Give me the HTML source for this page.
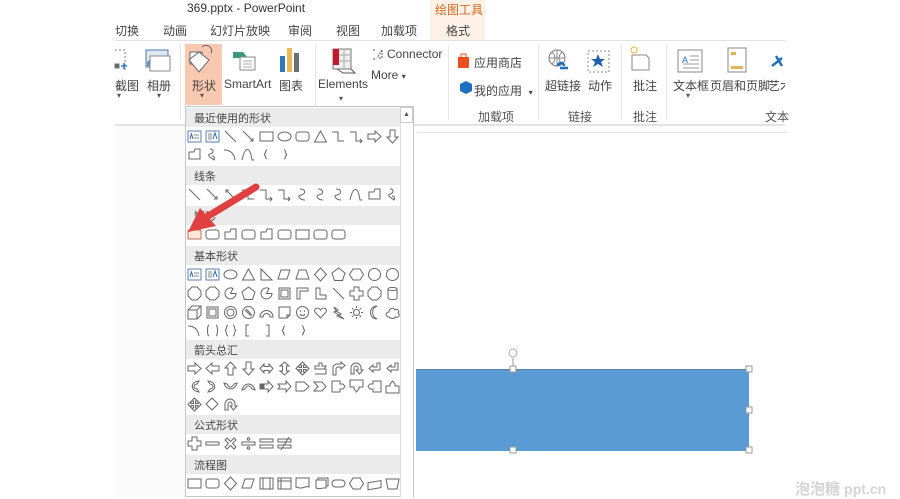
<!DOCTYPE html>
<html><head><meta charset="utf-8"><style>
*{margin:0;padding:0;box-sizing:border-box}
body{width:900px;height:497px;overflow:hidden;background:#fff;position:relative;font-family:"Liberation Sans","Noto Sans CJK SC",sans-serif;color:#444}
.a{position:absolute;white-space:nowrap}
.t{font-size:12px;color:#444}
.s{font-size:11px;color:#555}
</style></head><body>
<div class="a" style="left:430px;top:0;width:55px;height:40px;background:#fdf1e8"></div>
<div class="a t" style="left:187px;top:1px;font-size:12px;color:#333">369.pptx - PowerPoint</div>
<div class="a t" style="left:435px;top:1px;color:#d2691e">绘图工具</div>
<div class="a t" style="left:115px;top:22px">切换</div>
<div class="a t" style="left:163px;top:22px">动画</div>
<div class="a t" style="left:210px;top:22px">幻灯片放映</div>
<div class="a t" style="left:288px;top:22px">审阅</div>
<div class="a t" style="left:336px;top:22px">视图</div>
<div class="a t" style="left:381px;top:22px">加载项</div>
<div class="a t" style="left:446px;top:22px">格式</div>
<div class="a" style="left:115px;top:40px;width:670px;height:1px;background:#e1e1e1"></div>
<div class="a" style="left:115px;top:124px;width:670px;height:2px;background:#e3e3e3"></div>
<div class="a" style="left:115px;top:126px;width:70px;height:371px;background:#fbfbfb"></div>
<div class="a" style="left:185px;top:44px;width:37px;height:61px;background:#f8c8b1"></div>
<div class="a" style="left:180px;top:45px;width:1px;height:75px;background:#e6e6e6"></div>
<div class="a" style="left:315px;top:45px;width:1px;height:75px;background:#e6e6e6"></div>
<div class="a" style="left:448px;top:45px;width:1px;height:75px;background:#e6e6e6"></div>
<div class="a" style="left:538px;top:45px;width:1px;height:75px;background:#e6e6e6"></div>
<div class="a" style="left:621px;top:45px;width:1px;height:75px;background:#e6e6e6"></div>
<div class="a" style="left:666px;top:45px;width:1px;height:75px;background:#e6e6e6"></div>
<svg class="a" style="left:0;top:0" width="900" height="130">
 <g fill="none" stroke="#777" stroke-width="1">
  <path d="M115 50h10v20" stroke-dasharray="2 2"/>
  <rect x="115" y="64" width="4" height="4" fill="#666"/>
  <path d="M121 66h6M124 63v6" stroke="#2a7bd4" stroke-width="1.5"/>
  <rect x="146" y="50" width="22" height="17" fill="#dfe9f4" stroke="#4a78a8"/>
  <path d="M147 62l6-5 5 4 4-3 5 4v4h-20z" fill="#5f8fc0" stroke="none"/>
  <rect x="150" y="56" width="20" height="15" fill="#fff" stroke="#888"/>
  <path d="M190 52h12v12h-12z" stroke="#666" fill="#fff"/>
  <path d="M203 48l10 8-10 12-10-12z" transform="translate(-4 4)" stroke="#666" fill="#fff"/>
  <path d="M202 47c4-4 12 0 9 6" stroke="#666"/>
  <path d="M233 52l10 0 5 6h-15z" fill="#3a9a7a" stroke="none"/>
  <rect x="240" y="57" width="15" height="13" fill="#fff" stroke="#888"/>
  <path d="M243 61h9M243 64h9M243 67h9" stroke="#aaa"/>
  <rect x="280" y="56" width="5" height="16" fill="#2e75c0" stroke="none"/>
  <rect x="287" y="48" width="5" height="24" fill="#e8b95a" stroke="none"/>
  <rect x="294" y="53" width="5" height="19" fill="#6f6f6f" stroke="none"/>
  <rect x="333" y="49" width="18" height="20" fill="#eee" stroke="#777"/>
  <path d="M333 49h6v16h-6z" fill="#c4182b" stroke="none"/>
  <path d="M339 55h12M339 61h12M344 49v20" stroke="#aaa"/>
  <path d="M337 69l6 4h12l-4-4" stroke="#555"/>
  <path d="M373 50h3M373 59h3M382 50l-5 8M382 50v8h-4" stroke="#555" stroke-dasharray="2 1"/>
  <path d="M458 57h11v11h-11z" fill="#e8501e" stroke="none"/>
  <path d="M461 57v-3h5v3" stroke="#e8501e"/>
  <path d="M460 84l6-3 6 3v7l-6 3-6-3z" fill="#1f6fc0" stroke="none"/>
  <circle cx="557" cy="58" r="8" stroke="#777"/>
  <path d="M549 58h16M557 50v16M552 52c4 4 4 8 0 12M562 52c-4 4-4 8 0 12" stroke="#888"/>
  <path d="M560 68h8M558 66a3 3 0 0 1 6 0" stroke="#1f6fc0" stroke-width="2.5"/>
  <rect x="588" y="51" width="21" height="21" stroke="#888" stroke-dasharray="2 2"/>
  <path d="M598 54l2 5h5l-4 3 2 5-5-3-5 3 2-5-4-3h5z" fill="#1f5fb0" stroke="none"/>
  <path d="M632 55h14l3 3v12h-17z" stroke="#888" fill="#fff"/>
  <circle cx="634" cy="50" r="3" stroke="#e8b23a"/>
  <rect x="678" y="50" width="24" height="22" stroke="#888" fill="#fff"/>
  <path d="M690 56h9M690 60h9M683 64h16M683 68h16" stroke="#999"/>
  <rect x="728" y="48" width="18" height="24" stroke="#888" fill="#fff"/>
  <rect x="731" y="52" width="5" height="3" fill="#e2b35a" stroke="none"/>
  <rect x="731" y="66" width="12" height="3" fill="#e2b35a" stroke="none"/>
  <path d="M772 66l10-8M776 56l6 10" stroke="#1f6fc0" stroke-width="2.5"/>
 </g>
 <text x="682" y="63" font-size="9" fill="#1f6fc0" font-family="Liberation Sans">A</text>
</svg>
<div class="a t" style="left:115px;top:77px">截图</div>
<div class="a t" style="left:147px;top:77px">相册</div>
<div class="a t" style="left:192px;top:77px">形状</div>
<div class="a t" style="left:224px;top:77px">SmartArt</div>
<div class="a t" style="left:279px;top:77px">图表</div>
<div class="a t" style="left:318px;top:77px">Elements</div>
<div class="a t" style="left:387px;top:47px">Connector</div>
<div class="a t" style="left:371px;top:68px">More <span style="font-size:8px">▾</span></div>
<div class="a t" style="left:474px;top:54px">应用商店</div>
<div class="a t" style="left:474px;top:82px">我的应用 &nbsp;<span style="font-size:8px">▾</span></div>
<div class="a t" style="left:545px;top:77px">超链接</div>
<div class="a t" style="left:588px;top:77px">动作</div>
<div class="a t" style="left:633px;top:77px">批注</div>
<div class="a t" style="left:673px;top:77px">文本框</div>
<div class="a t" style="left:710px;top:77px">页眉和页脚</div>
<div class="a t" style="left:768px;top:77px;width:17px;overflow:hidden">艺术</div>
<div class="a s" style="left:117px;top:91px;font-size:8px">▾</div>
<div class="a s" style="left:157px;top:91px;font-size:8px">▾</div>
<div class="a s" style="left:200px;top:91px;font-size:8px">▾</div>
<div class="a s" style="left:339px;top:94px;font-size:8px">▾</div>
<div class="a s" style="left:686px;top:91px;font-size:8px">▾</div>
<div class="a t" style="left:478px;top:108px;color:#555">加载项</div>
<div class="a t" style="left:568px;top:108px;color:#555">链接</div>
<div class="a t" style="left:633px;top:108px;color:#555">批注</div>
<div class="a t" style="left:765px;top:108px;color:#555">文本</div>
<div class="a" style="left:413px;top:126px;width:1px;height:371px;background:#c8c8c8"></div>
<div class="a" style="left:417px;top:132px;width:370px;height:1px;background:#e6e6e6"></div>
<div class="a" style="left:416px;top:369px;width:333px;height:82px;background:#5b9bd5;border-top:1px solid #5a7fa8"></div>
<svg class="a" style="left:400px;top:340px" width="370" height="120">
 <g fill="#fff" stroke="#999">
  <circle cx="113" cy="13" r="4" fill="none" stroke="#aaa"/>
  <path d="M113 18v11" stroke="#999"/>
  <rect x="110" y="26" width="6" height="6"/>
  <rect x="346" y="26" width="6" height="6"/>
  <rect x="346" y="67" width="6" height="6"/>
  <rect x="110" y="107" width="6" height="6"/>
  <rect x="346" y="107" width="6" height="6"/>
 </g>
</svg>
<div class="a" style="left:795px;top:478px;font-size:15px;color:#d4d4d4;font-weight:bold">泡泡糖 <span style="font-size:14px">ppt.cn</span></div>
<div class="a" style="left:185px;top:106px;width:229px;height:391px;background:#fff;border:1px solid #c6c6c6"></div>
<div class="a" style="left:400px;top:107px;width:13px;height:390px;border-left:1px solid #ddd;background:#fff"></div>
<div class="a" style="left:400px;top:107px;width:13px;height:16px;border:1px solid #ccc;font-size:7px;text-align:center;line-height:14px;color:#555">▲</div>
<svg class="a" style="left:186px;top:107px" width="214" height="390" font-family="Liberation Sans,Noto Sans CJK SC,sans-serif">
 <defs>
  <g id="tb"><rect x="1" y="2" width="13" height="11" fill="#fff" stroke="#5b7fb0"/><path d="M7 6h5M7 9h5" stroke="#888"/><path d="M3 10l1.5-5 1.5 5" stroke="#2a6ab5" fill="none"/></g>
  <g id="tb2"><rect x="1" y="2" width="13" height="11" fill="#fff" stroke="#5b7fb0"/><path d="M4 4v7M6 4v7" stroke="#888"/><path d="M8 10l2-6 2 6" stroke="#2a6ab5" fill="none"/></g>
  <path id="ln" d="M2 2l11 11" fill="none" stroke="#666"/>
  <path id="la" d="M2 2l10 10M9 12h3v-3" fill="none" stroke="#666"/>
  <path id="ld" d="M3 3l9 9M3 6v-3h3M9 12h3v-3" fill="none" stroke="#666"/>
  <rect id="re" x="1" y="3" width="13" height="9" fill="none" stroke="#666"/>
  <ellipse id="el" cx="7.5" cy="7.5" rx="6.5" ry="4.5" fill="none" stroke="#666"/>
  <rect id="rr" x="1" y="3" width="13" height="9" rx="2.5" fill="none" stroke="#666"/>
  <path id="tr" d="M7.5 2l6 11h-12z" fill="none" stroke="#666"/>
  <path id="rt" d="M2 2v11h11z" fill="none" stroke="#666"/>
  <path id="eb" d="M1 3h6v9h6" fill="none" stroke="#666"/>
  <path id="ea" d="M1 3h6v9h6M11 10l2 2-2 2" fill="none" stroke="#666"/>
  <path id="ar" d="M1 5h7v-3l6 5.5-6 5.5v-3h-7z" fill="none" stroke="#666"/>
  <path id="al" d="M14 5h-7v-3l-6 5.5 6 5.5v-3h7z" fill="none" stroke="#666"/>
  <path id="au" d="M5 14v-7h-3l5.5-6 5.5 6h-3v7z" fill="none" stroke="#666"/>
  <path id="ad" d="M5 1v7h-3l5.5 6 5.5-6h-3v-7z" fill="none" stroke="#666"/>
  <path id="sn" d="M2 5h5l1-3h5v10h-11z" fill="none" stroke="#666"/>
  <path id="sq" d="M5 2c4 0 4 4 0 5s2 5 5 6M7 9c3 0 3 3 1 4" fill="none" stroke="#666"/>
  <path id="ac" d="M1 3c6 0 10 3 11 10" fill="none" stroke="#666"/>
  <path id="cv" d="M1 13c3-14 8-14 10 0l2 0" fill="none" stroke="#666"/>
  <path id="cs" d="M5 2c6 0 6 5 1 6s0 5 4 5" fill="none" stroke="#666"/>
  <path id="pa" d="M4 3h9l-3 9h-9z" fill="none" stroke="#666"/>
  <path id="tz" d="M4 3h7l3 9h-13z" fill="none" stroke="#666"/>
  <path id="di" d="M7.5 1l6 6.5-6 6.5-6-6.5z" fill="none" stroke="#666"/>
  <path id="pe" d="M7.5 1l6.5 5-2.5 7.5h-8l-2.5-7.5z" fill="none" stroke="#666"/>
  <path id="hx" d="M4 2h7l3.5 5.5-3.5 5.5h-7l-3.5-5.5z" fill="none" stroke="#666"/>
  <circle id="ci" cx="7.5" cy="7.5" r="6" fill="none" stroke="#666"/>
  <path id="pac" d="M13 7.5a5.5 5.5 0 1 1-3-5l-2.5 5z" fill="none" stroke="#666"/>
  <path id="fr" d="M2 2h11v11h-11zM4 4h7v7h-7z" fill="none" stroke="#666"/>
  <path id="lsh" d="M2 2h11v3h-8v8h-3z" fill="none" stroke="#666"/>
  <path id="ll" d="M3 2h4v7h6v4h-10z" fill="none" stroke="#666"/>
  <path id="pl" d="M5 1h5v4h4v5h-4v4h-5v-4h-4v-5h4z" fill="none" stroke="#666"/>
  <path id="oc" d="M5 1h5l4 4v5l-4 4h-5l-4-4v-5z" fill="none" stroke="#666"/>
  <path id="cy" d="M3 3v9c0 2 9 2 9 0v-9M3 3c0-2 9-2 9 0s-9 2-9 0" fill="none" stroke="#666"/>
  <path id="cu" d="M1 5h9v9h-9zM1 5l4-4h9v9l-4 4M10 5l4-4" fill="none" stroke="#666"/>
  <g id="do"><circle cx="7.5" cy="7.5" r="6" fill="none" stroke="#666"/><circle cx="7.5" cy="7.5" r="3.5" fill="none" stroke="#666"/></g>
  <g id="no"><circle cx="7.5" cy="7.5" r="6" fill="none" stroke="#666"/><path d="M4 5l6 6M5 4l6 6" stroke="#666"/></g>
  <path id="bl" d="M1 12a6.5 6.5 0 0 1 13 0h-3a3.5 3.5 0 0 0-7 0z" fill="none" stroke="#666"/>
  <path id="fo" d="M2 2h11v8l-3 3h-8zM10 13v-3h3" fill="none" stroke="#666"/>
  <g id="sm"><circle cx="7.5" cy="7.5" r="6" fill="none" stroke="#666"/><path d="M5 9c1 2 4 2 5 0" fill="none" stroke="#666"/><circle cx="5.5" cy="6" r=".8" fill="#666"/><circle cx="9.5" cy="6" r=".8" fill="#666"/></g>
  <path id="he" d="M7.5 13l-5.5-6c-2-3 3-6 5.5-2 2.5-4 7.5-1 5.5 2z" fill="none" stroke="#666"/>
  <path id="lt" d="M3 2l4 3-2 1 5 3-2 1 5 4-7-3 2-1-5-3 2-1z" fill="none" stroke="#666"/>
  <g id="su"><circle cx="7.5" cy="7.5" r="3" fill="none" stroke="#666"/><path d="M7.5 1v2M7.5 12v2M1 7.5h2M12 7.5h2M3 3l1.5 1.5M12 3l-1.5 1.5M3 12l1.5-1.5M12 12l-1.5-1.5" stroke="#666"/></g>
  <path id="mo" d="M10 1a7 7 0 0 0 0 13a5 5 0 0 1 0-13z" fill="none" stroke="#666"/>
  <path id="cl" d="M4 12c-4 0-4-5 0-5c0-4 5-5 6-2c3-2 5 2 3 3c3 2 0 5-2 4c-2 2-5 2-7 0z" fill="none" stroke="#666"/>
  <path id="bk" d="M4 2c-2 0-2 11 0 11M11 2c2 0 2 11 0 11" fill="none" stroke="#666"/>
  <path id="bb" d="M5 2c-2 0-1 5-3 5.5 2 .5 1 5.5 3 5.5M10 2c2 0 1 5 3 5.5-2 .5-1 5.5-3 5.5" fill="none" stroke="#666"/>
  <path id="lb" d="M8 2h-3v11h3" fill="none" stroke="#666"/>
  <path id="rb" d="M7 2h3v11h-3" fill="none" stroke="#666"/>
  <path id="lbr" d="M8 3c-2 0-1 4-3 4.5 2 .5 1 4.5 3 4.5" fill="none" stroke="#666"/>
  <path id="rbr" d="M7 3c2 0 1 4 3 4.5-2 .5-1 4.5-3 4.5" fill="none" stroke="#666"/>
  <path id="lra" d="M1 7.5l4-4.5v2.5h5v-2.5l4 4.5-4 4.5v-2.5h-5v2.5z" fill="none" stroke="#666"/>
  <path id="uda" d="M7.5 1l4.5 4h-2.5v5h2.5l-4.5 4-4.5-4h2.5v-5h-2.5z" fill="none" stroke="#666"/>
  <path id="qa" d="M7.5 1l3 3h-2v2.5h2.5v-2l3 3-3 3v-2h-2.5v2.5h2l-3 3-3-3h2v-2.5h-2.5v2l-3-3 3-3v2h2.5v-2.5h-2z" fill="none" stroke="#666"/>
  <path id="bt" d="M2 5h4v-3h3v3h4l-2 3h-9zM2 8h11v5h-11" fill="none" stroke="#666"/>
  <path id="ba" d="M2 14v-7c0-3 2-4 5-4h3v-2l4 3.5-4 3.5v-2h-3c-1 0-2 1-2 2v6z" fill="none" stroke="#666"/>
  <path id="ut" d="M2 13v-6a5 5 0 0 1 10 0v2h2l-3.5 4-3.5-4h2v-2a2 2 0 0 0-4 0v6z" fill="none" stroke="#666"/>
  <path id="lu" d="M13 2v7h-7v2l-4-3.5 4-3.5v2h4v-4z" fill="none" stroke="#666"/>
  <path id="cr" d="M12 2c-9 1-9 10 0 11l-2-3c-4-1-4-4 0-5z" fill="none" stroke="#666"/>
  <path id="cl2" d="M3 2c9 1 9 10 0 11l2-3c4-1 4-4 0-5z" fill="none" stroke="#666"/>
  <path id="cu2" d="M1 4c2 8 11 8 13 0l-3 1c-2 4-5 4-7 0z" fill="none" stroke="#666"/>
  <path id="cd" d="M1 11c2-8 11-8 13 0l-3-1c-2-4-5-4-7 0z" fill="none" stroke="#666"/>
  <path id="st" d="M1 5h1v5h-1zM3 5h1v5h-1zM5 5h4v-3l5 5.5-5 5.5v-3h-4z" fill="none" stroke="#666"/>
  <path id="nt" d="M1 5h8v-3l5 5.5-5 5.5v-3h-8l2-2.5z" fill="none" stroke="#666"/>
  <path id="pn" d="M1 3h8l5 4.5-5 4.5h-8z" fill="none" stroke="#666"/>
  <path id="ch" d="M1 3h8l4 4.5-4 4.5h-8l4-4.5z" fill="none" stroke="#666"/>
  <path id="rc" d="M1 2h8v3h3l2 2.5-2 2.5h-3v3h-8z" fill="none" stroke="#666"/>
  <path id="dc" d="M1 1h13v7h-4v2l-2.5 3-2.5-3v-2h-4z" fill="none" stroke="#666"/>
  <path id="lc" d="M14 2h-8v3h-3l-2 2.5 2 2.5h3v3h8z" fill="none" stroke="#666"/>
  <path id="uc" d="M1 14h13v-7h-4v-2l-2.5-3-2.5 3v2h-4z" fill="none" stroke="#666"/>
  <path id="cc" d="M1 7l3-3 3-3 3 3 3 3-3 3-3 3-3-3z" fill="none" stroke="#666"/>
  <path id="mn" d="M1 6h13v3h-13z" fill="none" stroke="#666"/>
  <path id="mu" d="M2 4l2-2 3.5 3.5 3.5-3.5 2 2-3.5 3.5 3.5 3.5-2 2-3.5-3.5-3.5 3.5-2-2 3.5-3.5z" fill="none" stroke="#666"/>
  <g id="dv"><path d="M1 6h13v3h-13z" fill="none" stroke="#666"/><circle cx="7.5" cy="3" r="1.2" fill="none" stroke="#666"/><circle cx="7.5" cy="12" r="1.2" fill="none" stroke="#666"/></g>
  <path id="eq" d="M1 3h13v3h-13zM1 9h13v3h-13z" fill="none" stroke="#666"/>
  <path id="ne" d="M1 3h13v3h-13zM1 9h13v3h-13zM4 14l8-13" fill="none" stroke="#666"/>
  <path id="pr" d="M1 2h13v11h-13zM4 2v11M11 2v11" fill="none" stroke="#666"/>
  <path id="is" d="M1 2h13v11h-13zM4 2v11M1 5h13" fill="none" stroke="#666"/>
  <path id="dcm" d="M1 2h13v9c-3-2-6 3-13 0z" fill="none" stroke="#666"/>
  <path id="mdc" d="M3 4h10v8c-3-1-5 2-10 0zM5 4v-2h10v8h-2" fill="none" stroke="#666"/>
  <rect id="term" x="1" y="4" width="13" height="7" rx="3.5" fill="none" stroke="#666"/>
  <path id="ml" d="M1 5h13v7h-13z" transform="skewY(-10) translate(0 2)" fill="none" stroke="#666"/>
  <path id="mo2" d="M1 3h13l-2 10h-9z" fill="none" stroke="#666"/>
 </defs>
 <g fill="#ebebeb">
  <rect x="0" y="1" width="214" height="19"/><rect x="0" y="59" width="214" height="19"/>
  <rect x="0" y="99" width="214" height="19"/><rect x="0" y="139" width="214" height="19"/>
  <rect x="0" y="233" width="214" height="19"/><rect x="0" y="308" width="214" height="19"/>
  <rect x="0" y="348" width="214" height="19"/>
 </g>
 <g font-size="11" fill="#444">
  <text x="8" y="15">最近使用的形状</text><text x="8" y="73">线条</text>
  <text x="8" y="113">矩形</text><text x="8" y="153">基本形状</text>
  <text x="8" y="247">箭头总汇</text><text x="8" y="322">公式形状</text>
  <text x="8" y="362">流程图</text>
 </g>
 <g transform="translate(1 22)"><use href="#tb"/><use href="#tb2" x="18"/><use href="#ln" x="36"/><use href="#la" x="54"/><use href="#re" x="72"/><use href="#el" x="90"/><use href="#rr" x="108"/><use href="#tr" x="126"/><use href="#eb" x="144"/><use href="#ea" x="162"/><use href="#ar" x="180"/><use href="#ad" x="198"/></g>
 <g transform="translate(1 40)"><use href="#sn"/><use href="#sq" x="18"/><use href="#ac" x="36"/><use href="#cv" x="54"/><use href="#lbr" x="72"/><use href="#rbr" x="90"/></g>
 <g transform="translate(1 80)"><use href="#ln"/><use href="#la" x="18"/><use href="#ld" x="36"/><use href="#eb" x="54"/><use href="#ea" x="72"/><use href="#ea" x="90"/><use href="#cs" x="108"/><use href="#cs" x="126"/><use href="#cs" x="144"/><use href="#cv" x="162"/><use href="#sn" x="180"/><use href="#sq" x="198"/></g>
 <g transform="translate(1 120)"><rect x="1" y="3" width="13" height="9" fill="#fde7dc" stroke="#c07050"/><use href="#rr" x="18"/><use href="#sn" x="36"/><use href="#rr" x="54"/><use href="#sn" x="72"/><use href="#rr" x="90"/><use href="#re" x="108"/><use href="#rr" x="126"/><use href="#rr" x="144"/></g>
 <g transform="translate(1 160)"><use href="#tb"/><use href="#tb2" x="18"/><use href="#el" x="36"/><use href="#tr" x="54"/><use href="#rt" x="72"/><use href="#pa" x="90"/><use href="#tz" x="108"/><use href="#di" x="126"/><use href="#pe" x="144"/><use href="#hx" x="162"/><use href="#ci" x="180"/><use href="#ci" x="198"/></g>
 <g transform="translate(1 179)"><use href="#oc"/><use href="#oc" x="18"/><use href="#pac" x="36"/><use href="#pe" x="54"/><use href="#pac" x="72"/><use href="#fr" x="90"/><use href="#lsh" x="108"/><use href="#ll" x="126"/><use href="#ln" x="144"/><use href="#pl" x="162"/><use href="#oc" x="180"/><use href="#cy" x="198"/></g>
 <g transform="translate(1 198)"><use href="#cu"/><use href="#fr" x="18"/><use href="#do" x="36"/><use href="#no" x="54"/><use href="#bl" x="72"/><use href="#fo" x="90"/><use href="#sm" x="108"/><use href="#he" x="126"/><use href="#lt" x="144"/><use href="#su" x="162"/><use href="#mo" x="180"/><use href="#cl" x="198"/></g>
 <g transform="translate(1 216)"><use href="#ac"/><use href="#bk" x="18"/><use href="#bb" x="36"/><use href="#lb" x="54"/><use href="#rb" x="72"/><use href="#lbr" x="90"/><use href="#rbr" x="108"/></g>
 <g transform="translate(1 254)"><use href="#ar"/><use href="#al" x="18"/><use href="#au" x="36"/><use href="#ad" x="54"/><use href="#lra" x="72"/><use href="#uda" x="90"/><use href="#qa" x="108"/><use href="#bt" x="126"/><use href="#ba" x="144"/><use href="#ut" x="162"/><use href="#lu" x="180"/><use href="#lu" x="198"/></g>
 <g transform="translate(1 272)"><use href="#cr"/><use href="#cl2" x="18"/><use href="#cu2" x="36"/><use href="#cd" x="54"/><use href="#st" x="72"/><use href="#nt" x="90"/><use href="#pn" x="108"/><use href="#ch" x="126"/><use href="#rc" x="144"/><use href="#dc" x="162"/><use href="#lc" x="180"/><use href="#uc" x="198"/></g>
 <g transform="translate(1 290)"><use href="#qa"/><use href="#cc" x="18"/><use href="#ut" x="36"/></g>
 <g transform="translate(1 329)"><use href="#pl"/><use href="#mn" x="18"/><use href="#mu" x="36"/><use href="#dv" x="54"/><use href="#eq" x="72"/><use href="#ne" x="90"/></g>
 <g transform="translate(1 369)"><use href="#re"/><use href="#rr" x="18"/><use href="#di" x="36"/><use href="#pa" x="54"/><use href="#pr" x="72"/><use href="#is" x="90"/><use href="#dcm" x="108"/><use href="#mdc" x="126"/><use href="#term" x="144"/><use href="#hx" x="162"/><use href="#ml" x="180"/><use href="#mo2" x="198"/></g>
</svg>
<svg class="a" style="left:180px;top:180px" width="90" height="60">
 <path d="M76 7L25 38" stroke="#e04040" stroke-width="7" stroke-linecap="round"/>
 <path d="M8 52L20 28L36 46z" fill="#e04040"/>
</svg>
</body></html>
